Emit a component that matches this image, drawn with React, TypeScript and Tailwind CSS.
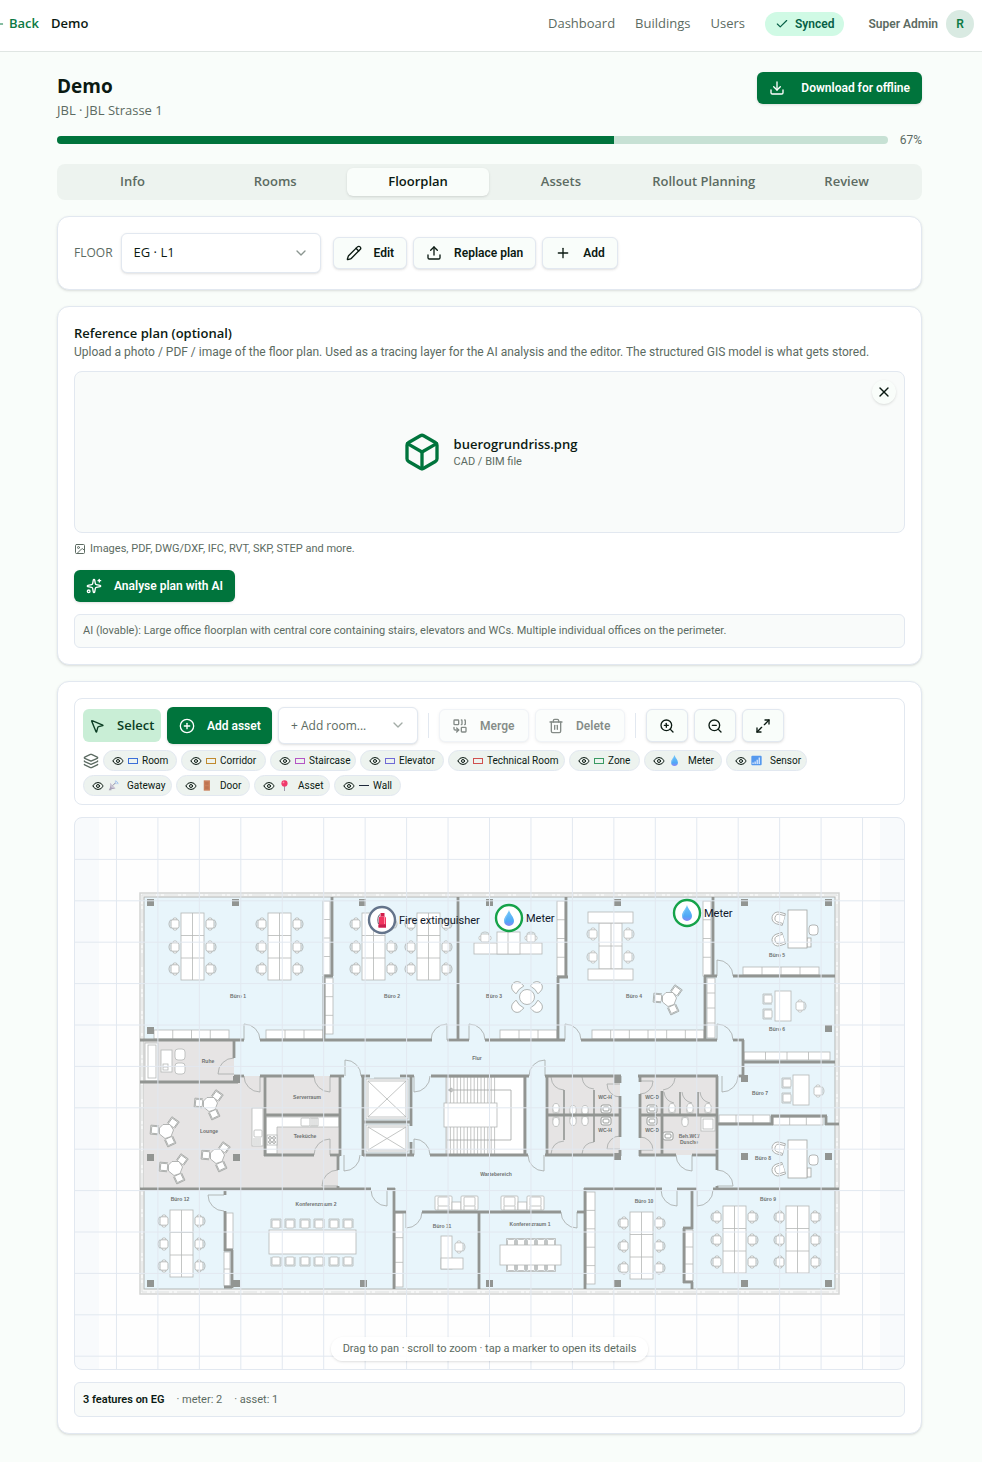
import type { ReactNode } from 'react'
import {
  ArrowLeft,
  Box,
  Check,
  ChevronDown,
  CirclePlus,
  Combine,
  Download,
  Eye,
  Image as ImageIcon,
  Layers,
  Maximize2,
  MousePointer2,
  Pencil,
  Plus,
  Sparkles,
  Trash2,
  Upload,
  X,
  ZoomIn,
  ZoomOut,
} from 'lucide-react'

const TABS = ['Info', 'Rooms', 'Floorplan', 'Assets', 'Rollout Planning', 'Review']

// compact face for the 10-12px texts
const small = "font-['Roboto','Noto_Sans',sans-serif]"

const outlineBtn = `${small} flex items-center rounded-md border border-[#e2e8f0] bg-[#f9fdfa] text-xs font-semibold text-[#0b1a12] shadow-sm`
const primaryBtn = `${small} flex items-center rounded-md bg-[#00743c] text-xs font-semibold text-white shadow-sm`

function Card({ children }: { children: ReactNode }) {
  return (
    <section className="rounded-xl border border-[#e2e8f0] bg-white p-4 shadow-sm">{children}</section>
  )
}

/* ---------- emoji glyphs ---------- */

function DropGlyph() {
  return (
    <g>
      <path d="M8 0C9 4 13 7 13 11a5 5 0 0 1-10 0C3 7 7 4 8 0z" fill="url(#drop)" />
      <path d="M8 0C7 4 3 7 3 11c0 1 .5 2 1 2.500C4 9 7 6 8 0z" fill="#8fd3fb" opacity="0.5" />
    </g>
  )
}

function Glyph({ children }: { children: ReactNode }) {
  return (
    <svg viewBox="0 0 16 16" className="mr-1 size-[11px] shrink-0" aria-hidden="true">
      {children}
    </svg>
  )
}

function Swatch({ color }: { color: string }) {
  return <span className="h-[6px] w-[10px] shrink-0 border" style={{ borderColor: color }} />
}

const LAYERS: { name: string; width: string; mark: ReactNode }[] = [
  { name: 'Room', width: 'min-w-[74px]', mark: <Swatch color="#3b6fd8" /> },
  { name: 'Corridor', width: 'min-w-[85px]', mark: <Swatch color="#c08a2e" /> },
  { name: 'Staircase', width: 'min-w-[86px]', mark: <Swatch color="#b455c4" /> },
  { name: 'Elevator', width: 'min-w-[84px]', mark: <Swatch color="#6f6ad6" /> },
  { name: 'Technical Room', width: 'min-w-[117px]', mark: <Swatch color="#d0504f" /> },
  { name: 'Zone', width: 'min-w-[71px]', mark: <Swatch color="#3a9a63" /> },
  { name: 'Meter', width: 'min-w-[78px]', mark: <Glyph><DropGlyph /></Glyph> },
  {
    name: 'Sensor',
    width: 'min-w-[81px]',
    mark: (
      <Glyph>
        <rect x="0.500" y="1" width="15" height="14" rx="1.500" fill="#5599ee" />
        <path d="M3 13v-2M6 13V9.500M9 13V7M12 13V3.500" stroke="#e4efff" strokeWidth="1.800" />
      </Glyph>
    ),
  },
  {
    name: 'Gateway',
    width: 'min-w-[89px]',
    mark: (
      <Glyph>
        <path d="M3 4c0 5 3 8 8 8l-2 1H5v2H1l2-4z" fill="#a9a3b8" />
        <path d="M3 4l8 8C6 13 2 10 3 4z" fill="#c9c4d4" />
        <path d="M7 8l4-4" stroke="#8d88a0" strokeWidth="1.400" />
        <path d="M10 1.500c3 0 4.500 2 4.500 4.500M10 4c1.500 0 2 1 2 2" stroke="#8ab4f0" strokeWidth="1.200" fill="none" />
      </Glyph>
    ),
  },
  {
    name: 'Door',
    width: 'min-w-[74px]',
    mark: (
      <Glyph>
        <rect x="4" y="0.500" width="9" height="15" fill="#c97f5a" />
        <path d="M6 3h5v4H6zM6 9h5v4H6z" fill="#bf7450" />
      </Glyph>
    ),
  },
  {
    name: 'Asset',
    width: 'min-w-[76px]',
    mark: (
      <Glyph>
        <path d="M8 8v8" stroke="#9a94a8" strokeWidth="1.500" />
        <circle cx="8" cy="5" r="4.500" fill="#f0386b" />
        <circle cx="6.500" cy="3.500" r="1.300" fill="#ff8fab" />
      </Glyph>
    ),
  },
  { name: 'Wall', width: 'min-w-[67px]', mark: <span className="h-px w-[10px] bg-[#1e293b]" /> },
]

/* ---------- floor plan ---------- */

const LINE = '#b5b7b6'
const WALL = '#929592'

// [x1, y1, x2, y2]
const WALLS = [
  [140, 1040, 244, 1040], [260, 1040, 432, 1040], [447, 1040, 469, 1040], [485, 1040, 565, 1040],
  [581, 1040, 717, 1040], [733, 1040, 744, 1040],
  [332, 897, 332, 976], [323, 976, 333, 976], [324, 976, 324, 1040],
  [458, 897, 458, 1040],
  [566, 897, 566, 977], [557, 977, 568, 977], [558, 977, 558, 1040],
  [713, 897, 713, 976], [704, 976, 717, 976], [705, 976, 705, 1040], [733, 976, 835, 976],
  [743, 1062, 835, 1062], [743, 1040, 743, 1077],
  [140, 1082, 238, 1082], [234, 1040, 234, 1058],
  [234, 1076, 244, 1076], [260, 1076, 314, 1076], [330, 1076, 344, 1076], [361, 1076, 370, 1076],
  [400, 1076, 414, 1076], [431, 1076, 529, 1076], [545, 1076, 621, 1076], [638, 1076, 718, 1076],
  [738, 1076, 744, 1076],
  [265, 1076, 265, 1156], [340, 1076, 340, 1156], [265, 1115, 340, 1115],
  [264, 1155, 314, 1155], [330, 1155, 340, 1155], [338, 1155, 338, 1170], [338, 1186, 338, 1190],
  [140, 1189, 371, 1189], [387, 1189, 395, 1189],
  [363, 1076, 363, 1156], [363, 1122, 411, 1122], [411, 1076, 411, 1126], [411, 1142, 411, 1156],
  [363, 1155, 414, 1155], [430, 1155, 528, 1155], [545, 1155, 621, 1155], [525, 1076, 525, 1156],
  [547, 1076, 547, 1156], [547, 1115, 620, 1115], [620, 1076, 620, 1083], [620, 1096, 620, 1137],
  [620, 1150, 620, 1156],
  [640, 1076, 640, 1082], [640, 1094, 640, 1138], [640, 1150, 640, 1156], [639, 1115, 718, 1115],
  [662, 1091, 662, 1155], [717, 1076, 717, 1170], [717, 1186, 717, 1190],
  [639, 1155, 676, 1155], [692, 1155, 718, 1155],
  [717, 1124, 773, 1124], [772, 1125, 772, 1116], [771, 1116, 827, 1116], [826, 1116, 826, 1125],
  [825, 1124, 839, 1124],
  [584, 1189, 662, 1189], [677, 1189, 697, 1189], [713, 1189, 839, 1189],
  [692, 1190, 692, 1229], [683, 1228, 693, 1228], [684, 1228, 684, 1283], [683, 1282, 693, 1282],
  [692, 1282, 692, 1289],
  [585, 1188, 585, 1289], [394, 1188, 394, 1289], [394, 1212, 406, 1212], [422, 1212, 561, 1212],
  [577, 1212, 585, 1212], [479, 1212, 479, 1289],
  [225, 1190, 225, 1195], [225, 1211, 225, 1251], [224, 1250, 233, 1250], [232, 1250, 232, 1288],
  [224, 1287, 232, 1287],
]

// thinner partitions inside the WCs
const PARTITIONS = [
  [564, 1090, 564, 1140], [594, 1090, 594, 1142], [680, 1092, 680, 1114], [698, 1092, 698, 1114],
]

const COLUMNS = [
  [147, 899], [232, 899], [359, 899], [486, 899], [614, 899], [741, 899], [825, 899],
  [147, 1027], [825, 1025], [741, 1075], [233, 1076], [614, 1076], [614, 1153], [147, 1154],
  [233, 1154], [741, 1153], [825, 1153], [147, 1280], [233, 1280], [360, 1280], [486, 1280],
  [614, 1280], [741, 1280], [825, 1280],
]

// [hinge x, hinge y, leaf x, leaf y, closed x, closed y]
const DOORS = [
  [244, 1040, 244, 1024, 260, 1040], [447, 1040, 447, 1024, 431, 1040], [469, 1040, 469, 1024, 485, 1040],
  [565, 1040, 565, 1024, 581, 1040], [717, 976, 717, 960, 733, 976], [717, 1040, 717, 1024, 733, 1040],
  [234, 1074, 218, 1074, 234, 1058], [260, 1076, 260, 1092, 244, 1076], [330, 1076, 330, 1092, 314, 1076],
  [345, 1076, 345, 1060, 361, 1076], [414, 1076, 414, 1092, 430, 1076], [545, 1076, 545, 1060, 529, 1076],
  [722, 1076, 722, 1092, 738, 1076], [330, 1155, 330, 1139, 314, 1155], [344, 1155, 344, 1171, 360, 1155],
  [338, 1186, 322, 1186, 338, 1170], [387, 1190, 387, 1206, 371, 1190], [224, 1195, 208, 1195, 224, 1211],
  [414, 1155, 414, 1139, 430, 1155], [544, 1155, 544, 1171, 528, 1155], [406, 1212, 406, 1228, 422, 1212],
  [577, 1212, 577, 1228, 561, 1212], [692, 1155, 692, 1171, 676, 1155], [717, 1186, 733, 1186, 717, 1170],
  [677, 1190, 677, 1206, 661, 1190], [697, 1190, 697, 1206, 713, 1190],
  [620, 1084, 607, 1084, 620, 1097], [620, 1149, 607, 1149, 620, 1136], [640, 1081, 653, 1081, 640, 1094],
  [640, 1150, 653, 1150, 640, 1137],
]

// toilet doors, drawn as a bare arc
const DOOR_ARCS = [
  'M551 1077Q552 1089 564 1090', 'M582 1077Q583 1088 594 1089', 'M564 1141Q552 1142 551 1154',
  'M594 1142Q583 1143 582 1154', 'M675 1078Q674 1088 663 1090', 'M664 1092Q665 1101 674 1103',
  'M682 1092Q683 1101 692 1103', 'M700 1092Q701 1101 710 1103',
]

// [x, y, w, h, cells]
const SHELVES = [
  [154, 1030, 75, 9, 4], [266, 1030, 57, 9, 3], [323, 901, 7, 74, 4], [325, 978, 8, 56, 3],
  [500, 1030, 57, 9, 3], [557, 901, 8, 75, 4], [592, 1030, 112, 9, 6], [703, 901, 8, 75, 4],
  [707, 978, 8, 60, 4], [743, 967, 76, 8, 4], [744, 1052, 86, 8, 4], [719, 1115, 51, 8, 3],
  [773, 1117, 50, 8, 3], [685, 1230, 8, 51, 3], [586, 1192, 9, 92, 5], [395, 1213, 8, 74, 3],
  [226, 1213, 7, 36, 1], [224, 1252, 6, 34, 2],
]

const DESK_BLOCKS = [
  [181, 913], [268, 913], [362, 913], [417, 913], [170, 1210], [630, 1212], [723, 1206], [786, 1206],
]

const ROUND_TABLES = [[669, 999], [210, 1104], [166, 1131], [175, 1168], [217, 1156]]

const ROOM_LABELS: [string, number, number][] = [
  ['Büro 1', 238, 998], ['Büro 2', 392, 998], ['Büro 3', 494, 998], ['Büro 4', 634, 998],
  ['Büro 5', 777, 957], ['Büro 6', 777, 1031], ['Büro 7', 760, 1095], ['Büro 8', 763, 1160],
  ['Büro 9', 768, 1201], ['Büro 10', 644, 1203], ['Büro 11', 442, 1228], ['Büro 12', 180, 1201],
  ['Konferenzraum 2', 316, 1206], ['Konferenzraum 1', 530, 1226], ['Flur', 477, 1060],
  ['Ruhe', 208, 1063], ['Lounge', 209, 1133], ['Serverraum', 307, 1099], ['Teeküche', 305, 1138],
  ['Wartebereich', 496, 1176], ['WC-H', 605, 1099], ['WC-H', 605, 1132], ['WC-D', 652, 1099],
  ['WC-D', 652, 1132], ['Beh.WC/', 689, 1138], ['Dusche', 689, 1144],
]

function Rect({ x, y, w, h, r }: { x: number; y: number; w: number; h: number; r?: number }) {
  return <rect x={x} y={y} width={w} height={h} rx={r} fill="#fff" />
}

function Chair({ x, y, rotate = 0 }: { x: number; y: number; rotate?: number }) {
  return (
    <g transform={`translate(${x} ${y}) rotate(${rotate})`} fill="#fff">
      <rect x="-2" y="-6" width="4" height="12" rx="1.500" />
      <path d="M4-4.500a6 6 0 0 1 0 9" fill="none" />
      <rect x="-4" y="-4.200" width="8" height="8.400" rx="1.800" />
    </g>
  )
}

function Seat({ x, y, rotate = 0, s = 8 }: { x: number; y: number; rotate?: number; s?: number }) {
  return (
    <g transform={`translate(${x} ${y}) rotate(${rotate})`} fill="#fff">
      <rect x={-s / 2} y={-s / 2} width={s} height={s} rx="1" />
      <path d={`M${-s / 2 - 1} ${s / 2}V${-s / 2 - 1}H${s / 2 + 1}V${s / 2}`} fill="none" />
    </g>
  )
}

function Armchair({ x, y, rotate }: { x: number; y: number; rotate: number }) {
  return (
    <g transform={`translate(${x} ${y}) rotate(${rotate})`} fill="#fff">
      <path d="M6-6H0a6 6 0 0 0 0 12h6z" />
      <path d="M6-4H1a4 4 0 0 0 0 8h5" />
    </g>
  )
}

function DeskBlock({ x, y }: { x: number; y: number }) {
  return (
    <g>
      {[11, 34, 56].map((dy) => (
        <g key={dy} stroke="#a8abaa">
          <Chair x={x - 6} y={y + dy} rotate={180} />
          <Chair x={x + 29} y={y + dy} />
        </g>
      ))}
      <Rect x={x} y={y} w={23} h={67} />
      <path d={`M${x + 11.5} ${y}v67M${x} ${y + 22.5}h23M${x} ${y + 45}h23`} />
    </g>
  )
}

function Shelf({ x, y, w, h, n }: { x: number; y: number; w: number; h: number; n: number }) {
  const horizontal = w > h
  return (
    <g>
      <Rect x={x} y={y} w={w} h={h} />
      {Array.from({ length: n - 1 }, (_, i) =>
        horizontal ? (
          <path key={i} d={`M${x + (w / n) * (i + 1)} ${y}v${h}`} />
        ) : (
          <path key={i} d={`M${x} ${y + (h / n) * (i + 1)}h${w}`} />
        ),
      )}
    </g>
  )
}

function doorPath([hx, hy, lx, ly, cx, cy]: number[]) {
  const r = Math.abs(cx - lx)
  const cross = (lx - hx) * (cy - hy) - (ly - hy) * (cx - hx)
  return `M${hx} ${hy}L${lx} ${ly}A${r} ${r} 0 0 ${cross >= 0 ? 1 : 0} ${cx} ${cy}`
}

function Toilet({ x, y, flip }: { x: number; y: number; flip?: boolean }) {
  return (
    <g fill="#fff">
      <rect x={x - 3} y={flip ? y - 5 : y + 1} width="6" height="4" rx="1" />
      <ellipse cx={x} cy={y} rx="3.200" ry="4.500" />
    </g>
  )
}

function Basin({ x, y }: { x: number; y: number }) {
  return (
    <g fill="#fff" stroke="#999c9a">
      <rect x={x - 5} y={y - 4} width="10" height="8" rx="2" />
      <rect x={x - 3} y={y - 2} width="6" height="4" rx="1" />
    </g>
  )
}

function FloorDrawing() {
  return (
    <g>
      <rect x="140" y="893" width="699" height="401" fill="#f6f7f7" stroke="#d3d5d4" strokeWidth="1.500" />
      <rect x="142" y="895" width="695" height="397" fill="none" stroke="#dfe1e0" strokeDasharray="14 3 2 3" />
      <rect x="144" y="897" width="691" height="392" fill="#e8f5fb" stroke="#b3b6b4" />
      <g fill="#e6e4e4">
        <rect x="144" y="1041" width="90" height="41" />
        <path d="M144 1083h90v-7h106v79h-2v34H144z" />
        <rect x="548" y="1077" width="72" height="78" />
        <rect x="640" y="1077" width="77" height="78" />
      </g>

      <g stroke={LINE} strokeWidth="0.800" fill="none">
        {/* stairs */}
        <Rect x={446} y={1077} w={78} h={78} />
        {Array.from({ length: 15 }, (_, i) => (
          <path key={i} d={`M${447 + i * 3.4} 1077v78`} />
        ))}
        <path d="M452 1088l-4 2 4 2zM448 1090H511V1140H447" stroke="#a2a5a3" />
        <Rect x={444} y={1103} w={53} h={24} />

        {/* lifts */}
        <Rect x={366} y={1079} w={42} h={40} />
        <Rect x={368} y={1081} w={38} h={36} />
        <path d="M368 1081L406 1117M406 1081L368 1117" />
        <Rect x={366} y={1125} w={42} h={27} />
        <Rect x={368} y={1127} w={38} h={23} />
        <path d="M368 1127L406 1150M406 1127L368 1150M374 1078h26" />

        {/* kitchen */}
        <path d="M266 1117h73v10h-62v27h-11z" fill="#fff" />
        <Rect x={301} y={1118} w={9} h={8} r={1} />
        <path d="M310 1118h8v8h-8M312 1118v8M314 1118v8M316 1118v8" />
        <Rect x={267} y={1135} w={10} h={10} />
        <g stroke="#8f9290">
          <circle cx="270" cy="1138" r="1.400" />
          <circle cx="274" cy="1138" r="1.400" />
          <circle cx="270" cy="1142" r="1.400" />
          <circle cx="274" cy="1142" r="1.400" />
        </g>
        <Rect x={252} y={1108} w={11} h={38} />
        <Rect x={254} y={1130} w={8} h={7} r={1} />
        <path d="M254 1138v7M256 1138v7M258 1138v7M260 1138v7" />

        {/* quiet room */}
        <Rect x={145} y={1043} w={13} h={38} />
        <Rect x={148} y={1045} w={8} h={33} />
        <Rect x={161} y={1050} w={11} h={22} />
        <Rect x={163} y={1064} w={5} h={6} />
        <path d="M163 1067h5" />
        <Rect x={175} y={1049} w={10} h={11} r={3} />
        <Rect x={175} y={1063} w={10} h={11} r={3} />

        {SHELVES.map(([x, y, w, h, n]) => (
          <Shelf key={`${x}-${y}`} x={x} y={y} w={w} h={h} n={n} />
        ))}
        {DESK_BLOCKS.map(([x, y]) => (
          <DeskBlock key={`${x}-${y}`} x={x} y={y} />
        ))}

        {/* office 3 */}
        <Chair x={485} y={938} rotate={270} />
        <Chair x={531} y={938} rotate={270} />
        <Rect x={474} y={943} w={68} h={11} />
        <Rect x={497} y={932} w={23} h={22} />
        <path d="M508 932v22" />
        <g stroke="#a2a5a3">
          {[45, 135, 225, 315].map((a) => (
            <path
              key={a}
              transform={`translate(527 997) rotate(${a})`}
              d="M10-5.500h4a5.500 5.500 0 0 1 0 11H10q2-5.500 0-11z"
              fill="#fff"
            />
          ))}
          <circle cx="527" cy="997" r="7.500" fill="#fff" />
        </g>

        {/* office 4 */}
        {[934, 957].map((y) => (
          <g key={y}>
            <Chair x={593} y={y} rotate={180} />
            <Chair x={628} y={y} />
          </g>
        ))}
        <Rect x={599} y={923} w={23} h={46} />
        <path d="M611 923v46M599 946h23" />
        <Rect x={588} y={912} w={45} h={11} />
        <Rect x={588} y={969} w={45} h={11} />

        {/* offices 5 to 8 */}
        {[910, 1140].map((y) => (
          <g key={y} stroke="#a2a5a3">
            <Armchair x={778} y={y + 8} rotate={15} />
            <Armchair x={778} y={y + 30} rotate={-18} />
            <Rect x={807} y={y + 28} w={4} h={9} />
            <Rect x={809} y={y + 15} w={9} h={10} r={3} />
            <Rect x={788} y={y} w={19} h={38} />
          </g>
        ))}
        <Seat x={768} y={999} rotate={270} />
        <Seat x={768} y={1014} rotate={270} />
        <Rect x={775} y={991} w={16} h={30} />
        <Chair x={800} y={1006} />
        <Seat x={787} y={1083} rotate={270} />
        <Seat x={787} y={1098} rotate={270} />
        <Rect x={793} y={1075} w={16} h={30} />
        <Chair x={818} y={1091} />

        {ROUND_TABLES.map(([x, y]) => (
          <g key={`${x}-${y}`} stroke="#a2a5a3">
            <Seat x={x - 11} y={y - 1} rotate={-85} s={7} />
            <Seat x={x + 7} y={y - 8} rotate={35} s={7} />
            <Seat x={x + 4} y={y + 10} rotate={155} s={7} />
            <path
              transform={`translate(${x} ${y})`}
              d="M-3-6.500L4-6.500L7.500-1L5 5.500L-1 7.500L-6.500 3L-6.500-3z"
              fill="#fff"
            />
          </g>
        ))}

        {/* conference rooms */}
        {[276, 290, 305, 319, 334, 348].map((x) => (
          <g key={x}>
            <Seat x={x} y={1224} />
            <Seat x={x} y={1261} rotate={180} />
          </g>
        ))}
        <Rect x={269} y={1230} w={87} h={24} />
        {[511, 521, 531, 541, 551].map((x) => (
          <g key={x}>
            <Seat x={x} y={1243} s={7} />
            <Seat x={x} y={1267} rotate={180} s={7} />
          </g>
        ))}
        <Rect x={500} y={1245} w={61} h={20} />

        {/* office 11 */}
        <Rect x={441} y={1236} w={11} h={33} />
        <Rect x={441} y={1258} w={22} h={11} />
        <Chair x={459} y={1247} />

        {/* waiting area */}
        {[435, 501].map((x) => (
          <g key={x}>
            <Rect x={x} y={1196} w={17} h={14} r={1} />
            <Rect x={x + 3} y={1197} w={11} h={9} r={1} />
            <Rect x={x + 17} y={1202} w={9} h={8} />
            <Rect x={x + 26} y={1196} w={17} h={14} r={1} />
            <Rect x={x + 29} y={1197} w={11} h={9} r={1} />
            <path d={`M${x + 3} 1206v4M${x + 14} 1206v4M${x + 29} 1206v4M${x + 40} 1206v4`} />
          </g>
        ))}

        {/* sanitary */}
        <Toilet x={556} y={1108} />
        <Toilet x={573} y={1110} />
        <Toilet x={585} y={1110} />
        <Toilet x={556} y={1122} flip />
        <Toilet x={573} y={1121} flip />
        <Toilet x={585} y={1121} flip />
        <Toilet x={672} y={1108} />
        <Toilet x={690} y={1108} />
        <Toilet x={708} y={1108} />
        <Toilet x={685} y={1122} flip />
        <Rect x={701} y={1117} w={14} h={14} />
        <Rect x={703} y={1119} w={10} h={10} />

        {DOORS.map((d) => (
          <path key={d.join()} d={doorPath(d)} stroke="#a5a8a7" />
        ))}
        {DOOR_ARCS.map((d) => (
          <path key={d} d={d} stroke="#a5a8a7" />
        ))}
      </g>

      <g stroke={WALL} strokeWidth="2.800">
        {WALLS.map(([x1, y1, x2, y2]) => (
          <line key={`${x1},${y1},${x2},${y2}`} x1={x1} y1={y1} x2={x2} y2={y2} />
        ))}
      </g>
      <g stroke={WALL} strokeWidth="1.600">
        {PARTITIONS.map(([x1, y1, x2, y2]) => (
          <line key={x1} x1={x1} y1={y1} x2={x2} y2={y2} />
        ))}
      </g>
      <g fill={WALL}>
        {COLUMNS.map(([x, y]) => (
          <rect key={`${x}-${y}`} x={x} y={y} width="7" height="7" />
        ))}
      </g>
      <Basin x={606} y={1109} />
      <Basin x={606} y={1121} />
      <Basin x={652} y={1109} />
      <Basin x={652} y={1121} />
      <Basin x={668} y={1136} />

      <g fill="#6f7271" fontSize="5" fontWeight="700" textAnchor="middle" className="font-['Liberation_Sans',sans-serif]">
        {ROOM_LABELS.map(([label, x, y]) => (
          <text key={`${label}-${y}`} x={x} y={y}>
            {label}
          </text>
        ))}
      </g>
    </g>
  )
}

function Marker({ x, y, color, label, children }: {
  x: number
  y: number
  color: string
  label: string
  children: ReactNode
}) {
  return (
    <g>
      <circle cx={x} cy={y} r="13" fill="#fff" stroke={color} strokeWidth="2.400" />
      <g transform={`translate(${x - 8} ${y - 8})`}>{children}</g>
      <text x={x + 17} y={y + 4} fontSize="11" fill="#0f172a">
        {label}
      </text>
    </g>
  )
}

function FloorCanvas() {
  return (
    <div className="relative mt-3 overflow-hidden rounded-lg border border-[#e2e8f0] bg-[#f8fafc]">
      <svg viewBox="75 818 829 551" className={`${small} block w-full`} role="img" aria-label="Floorplan EG">
        <defs>
          <linearGradient id="drop" x1="0" y1="0" x2="0" y2="1">
            <stop offset="0" stopColor="#74c8f8" />
            <stop offset="0.700" stopColor="#4fa8f6" />
            <stop offset="1" stopColor="#8a86f6" />
          </linearGradient>
        </defs>
        <rect x="99" y="818" width="781" height="551" fill="#fefefe" />
        <FloorDrawing />
        <g stroke="#e2e8f0">
          {Array.from({ length: 19 }, (_, i) => (
            <line key={i} x1={116.45 + i * 41.45} y1="818" x2={116.45 + i * 41.45} y2="1369" />
          ))}
          {Array.from({ length: 13 }, (_, i) => (
            <line key={i} x1="75" y1={859.4 + i * 41.4} x2="904" y2={859.4 + i * 41.4} />
          ))}
        </g>
        <Marker x={382} y={920} color="#64748b" label="Fire extinguisher">
          <path d="M5 5.500Q5 4.500 6 4.500h4.500q1.500 0 1.500 2V15.500H4.500z" fill="#f0355f" />
          <path d="M6.500 1h4v3.500h-4z" fill="#d11f4a" />
          <path d="M6 2.500C3.500 4 3.500 9 4.500 12" stroke="#5b5568" strokeWidth="1" fill="none" />
          <path d="M4.500 12.500H12v3H4.500z" fill="#c4204e" />
          <path d="M10.500 5v7" stroke="#ff8fa8" strokeWidth="1" />
        </Marker>
        <Marker x={509} y={918} color="#16a34a" label="Meter">
          <DropGlyph />
        </Marker>
        <Marker x={687} y={913} color="#16a34a" label="Meter">
          <DropGlyph />
        </Marker>
      </svg>
      <div className="pointer-events-none absolute inset-x-0 bottom-2 flex justify-center">
        <span
          className={`${small} rounded-full bg-white/90 px-3 py-1 text-[11px] leading-4 text-[#5c6b62] shadow-sm`}
        >
          Drag to pan · scroll to zoom · tap a marker to open its details
        </span>
      </div>
    </div>
  )
}

/* ---------- page sections ---------- */

function Header() {
  return (
    <header className="flex h-[52px] items-center overflow-hidden border-b border-[#e0e6e3] bg-white pr-2 pb-1">
      <a href="#back" className="-ml-2.5 flex items-center gap-[3px] text-[13px] font-semibold text-[#0d7a45]">
        <ArrowLeft className="size-4" strokeWidth={1.5} />
        Back
      </a>
      <span className="ml-3 text-[13px] font-semibold text-[#0b1a12]">Demo</span>
      <nav className="ml-auto flex items-center gap-5 text-[13px] text-[#5c6b62]">
        <a href="#dashboard">Dashboard</a>
        <a href="#buildings">Buildings</a>
        <a href="#users">Users</a>
      </nav>
      <span
        className={`${small} ml-5 flex h-6 items-center gap-1.5 rounded-full bg-[#d0fae5] px-2.5 text-xs font-semibold text-[#065f46]`}
      >
        <Check className="size-3.5" />
        Synced
      </span>
      <span className={`${small} ml-6 text-xs font-semibold text-[#5c6b62]`}>Super Admin</span>
      <span
        className={`${small} ml-2 flex size-7 items-center justify-center rounded-full bg-[#d9eae2] text-xs font-semibold text-[#0d7a45]`}
      >
        R
      </span>
    </header>
  )
}

function FloorPicker() {
  return (
    <Card>
      <div className="flex items-center">
        <label htmlFor="floor" className="mr-2 text-xs font-medium text-[#5c6b62]">
          FLOOR
        </label>
        <div className="relative mr-3">
          <select
            id="floor"
            className="h-10 w-[200px] appearance-none rounded-md border border-[#e2e8f0] bg-white px-3 text-[13px] text-[#0b1a12] shadow-sm"
          >
            <option>EG · L1</option>
          </select>
          <ChevronDown className="pointer-events-none absolute top-3 right-3 size-4 text-[#8b9690]" />
        </div>
        <div className="flex gap-1.5">
          <button className={`${outlineBtn} h-8 gap-3 px-3`}>
            <Pencil className="size-4" />
            Edit
          </button>
          <button className={`${outlineBtn} h-8 gap-3 px-3`}>
            <Upload className="size-4" />
            Replace plan
          </button>
          <button className={`${outlineBtn} h-8 gap-3 px-3`}>
            <Plus className="size-4" />
            Add
          </button>
        </div>
      </div>
    </Card>
  )
}

function ReferencePlan() {
  return (
    <Card>
      <h2 className="text-[13px] leading-5 font-semibold text-[#0b1a12]">Reference plan (optional)</h2>
      <p className={`${small} text-xs leading-[18px] text-[#5c6b62]`}>
        Upload a photo / PDF / image of the floor plan. Used as a tracing layer for the AI analysis and the
        editor. The structured GIS model is what gets stored.
      </p>
      <div className="relative mt-[10px] flex h-[162px] items-center justify-center gap-3 rounded-lg border border-[#e2e8f0] bg-[#f9fbfa]">
        <Box className="size-10 text-[#00743c]" />
        <div>
          <div className="text-[13px] leading-5 font-semibold text-[#0b1a12]">buerogrundriss.png</div>
          <div className={`${small} text-[11px] leading-4 text-[#5c6b62]`}>CAD / BIM file</div>
        </div>
        <button
          aria-label="Remove plan"
          className="absolute top-2 right-2 flex size-6 items-center justify-center rounded-full bg-[#f9fdfa] text-[#0b1a12] shadow-sm"
        >
          <X className="size-4" />
        </button>
      </div>
      <div className={`${small} mt-2 flex items-center gap-1 text-[11px] leading-4 text-[#5c6b62]`}>
        <ImageIcon className="size-3" />
        Images, PDF, DWG/DXF, IFC, RVT, SKP, STEP and more.
      </div>
      <button className={`${primaryBtn} mt-[13px] h-8 gap-3 px-3`}>
        <Sparkles className="size-4" />
        Analyse plan with AI
      </button>
      <div
        className={`${small} mt-3 rounded-md border border-[#e2e8f0] bg-[#f9fbfa] p-2 text-[11px] leading-4 text-[#5c6b62]`}
      >
        AI (lovable): Large office floorplan with central core containing stairs, elevators and WCs. Multiple
        individual offices on the perimeter.
      </div>
    </Card>
  )
}

function Toolbar() {
  return (
    <div className="rounded-lg border border-[#e2e8f0] p-2">
      <div className="flex items-center gap-1.5">
        <button className="flex h-[33px] w-[78px] items-center gap-3 rounded-md bg-[#c9eed6] px-1.5 text-[13px] font-semibold text-[#0b3d23]">
          <MousePointer2 className="size-4 shrink-0" />
          Select
        </button>
        <button className={`${primaryBtn} h-[37px] w-[105px] gap-3 px-3 whitespace-nowrap`}>
          <CirclePlus className="size-4 shrink-0" />
          Add asset
        </button>
        <div className="relative">
          <select
            aria-label="Add room"
            className="block h-[37px] w-[140px] appearance-none rounded-md border border-[#e2e8f0] bg-white px-3 text-xs text-[#5c6b62] shadow-sm"
          >
            <option>+ Add room...</option>
          </select>
          <ChevronDown className="pointer-events-none absolute top-2.5 right-3 size-4 text-[#a3aca7]" />
        </div>
        <span className="mx-1 h-[25px] w-px bg-[#e2e8f0]" />
        <button disabled className={`${outlineBtn} h-[33px] w-[90px] gap-3 px-3 opacity-50`}>
          <Combine className="size-4 shrink-0" />
          Merge
        </button>
        <button disabled className={`${outlineBtn} h-[33px] w-[90px] gap-3 px-3 opacity-50`}>
          <Trash2 className="size-4 shrink-0" />
          Delete
        </button>
        <span className="mx-1 h-[25px] w-px bg-[#e2e8f0]" />
        <button aria-label="Zoom in" className={`${outlineBtn} h-[33px] w-[42px] justify-center`}>
          <ZoomIn className="size-4" />
        </button>
        <button aria-label="Zoom out" className={`${outlineBtn} h-[33px] w-[42px] justify-center`}>
          <ZoomOut className="size-4" />
        </button>
        <button aria-label="Fit to view" className={`${outlineBtn} h-[33px] w-[42px] justify-center`}>
          <Maximize2 className="size-4" />
        </button>
      </div>
      <div className="mt-1.5 flex flex-wrap items-center gap-1">
        <Layers className="size-4 text-[#5c6b62]" />
        {LAYERS.map((l) => (
          <button
            key={l.name}
            className={`${l.width} ${small} flex h-[21px] items-center gap-1 rounded-full border border-[#e2e8f0] bg-[#edf3ef] pr-1 pl-2 text-[10px] whitespace-nowrap text-[#0b1a12]`}
          >
            <Eye className="size-3 shrink-0" />
            {l.mark}
            {l.name}
          </button>
        ))}
      </div>
    </div>
  )
}

export default function App() {
  return (
    <div className="min-h-screen bg-[#f9fdfa] font-['Open_Sans','Noto_Sans',sans-serif]">
      <Header />
      <main className="flex flex-col gap-4 pt-5 pr-[60px] pb-7 pl-[57px]">
        <div className="flex items-start justify-between">
          <div>
            <h1 className="text-[19px] leading-7 font-bold text-[#0b1a12]">Demo</h1>
            <p className="text-[13px] leading-5 text-[#5c6b62]">JBL · JBL Strasse 1</p>
          </div>
          <button className={`${primaryBtn} h-8 gap-4 px-3`}>
            <Download className="size-4" />
            Download for offline
          </button>
        </div>
        <div className="flex h-2 items-center gap-3">
          <div
            role="progressbar"
            aria-valuenow={67}
            className="h-2 flex-1 overflow-hidden rounded-full bg-[#c7e1d4]"
          >
            <div className="h-full bg-[#00743c]" style={{ width: '67%' }} />
          </div>
          <span className={`${small} text-xs text-[#5c6b62]`}>67%</span>
        </div>
        <div role="tablist" className="mt-1 grid h-9 grid-cols-6 rounded-lg bg-[#edf3ef] p-1">
          {TABS.map((tab) => (
            <button
              key={tab}
              role="tab"
              aria-selected={tab === 'Floorplan'}
              className={`rounded-md text-[13px] font-semibold ${
                tab === 'Floorplan' ? 'bg-[#f9fdfa] text-[#0b1a12] shadow-sm' : 'text-[#5c6b62]'
              }`}
            >
              {tab}
            </button>
          ))}
        </div>
        <FloorPicker />
        <ReferencePlan />
        <Card>
          <Toolbar />
          <FloorCanvas />
          <div
            className={`${small} mt-3 flex gap-3 rounded-md border border-[#e2e8f0] bg-[#f9fbfa] p-2 text-[11px] leading-[17px] text-[#5c6b62]`}
          >
            <span className="font-semibold text-[#0b1a12]">3 features on EG</span>
            <span>· meter: 2</span>
            <span>· asset: 1</span>
          </div>
        </Card>
      </main>
    </div>
  )
}
